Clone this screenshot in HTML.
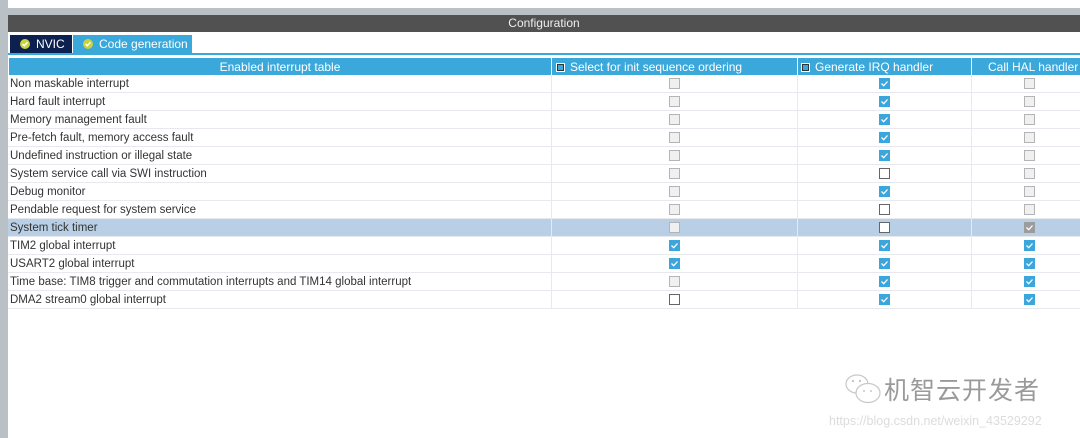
<!DOCTYPE html>
<html><head><meta charset="utf-8"><style>
*{margin:0;padding:0;box-sizing:border-box}
body{width:1080px;height:438px;overflow:hidden;background:#fff;font-family:"Liberation Sans",Arial,sans-serif;font-size:11.5px;color:#333;position:relative}
.a{position:absolute}
.row{position:absolute;left:8px;width:1072px;height:18px;border-bottom:1px solid #e6eaee}
.row span{position:absolute;left:2px;top:3px}
.vl{position:absolute;top:0;width:1px;height:18px;background:#e6eaee}
.cb{position:absolute;top:3px;width:11px;height:11px}
.d{background:#f0f0f0;border:1px solid #b4b4b4}
.e{background:#fff;border:1px solid #666}
.c{background:#3aa6dc}
.g{background:#9c9c9c}
.c svg,.g svg{position:absolute;left:1px;top:1px}
.hd{position:absolute;top:58px;height:17px;background:#3aa8da;color:#fff;font-size:12px;line-height:18px}
.hb{display:inline-block;width:9px;height:9px;border:1px solid #fff;background:#3aa8da;outline:1px solid #333;outline-offset:-2px;vertical-align:-1px;margin-right:5px}
.ic{display:inline-block;width:10px;height:10px;border-radius:50%;background:#c8d43a;position:relative;vertical-align:-1px;margin-right:6px}
</style></head><body>
<div class="a" style="left:0;top:0;width:8px;height:438px;background:#b9c1c7"></div>
<div class="a" style="left:8px;top:8px;width:1072px;height:7px;background:#b9c1c7"></div>
<div class="a" style="left:8px;top:15px;width:1072px;height:17px;background:#515151;color:#eee;text-align:center;line-height:17px;font-size:12px">Configuration</div>
<div class="a" style="left:10px;top:35px;width:62px;height:18px;background:#0c2150;color:#fff;line-height:18px;padding-left:10px;font-size:12px"><span class="ic"><svg width="10" height="10" style="position:absolute;left:0;top:0"><path d="M2.5 5 L4.3 6.8 L7.5 3.3" stroke="#fff" stroke-width="1.5" fill="none"/></svg></span>NVIC</div>
<div class="a" style="left:73px;top:35px;width:119px;height:19px;background:#3aa8da;color:#fff;line-height:18px;padding-left:10px;font-size:12px"><span class="ic"><svg width="10" height="10" style="position:absolute;left:0;top:0"><path d="M2.5 5 L4.3 6.8 L7.5 3.3" stroke="#fff" stroke-width="1.5" fill="none"/></svg></span>Code generation</div>
<div class="a" style="left:8px;top:53px;width:1072px;height:2px;background:#3aa8da"></div>
<div class="hd" style="left:9px;width:542px;text-align:center">Enabled interrupt table</div>
<div class="hd" style="left:552px;width:245px;padding-left:4px"><span class="hb"></span>Select for init sequence ordering</div>
<div class="hd" style="left:798px;width:173px;padding-left:3px"><span class="hb"></span>Generate IRQ handler</div>
<div class="hd" style="left:972px;width:108px;padding-left:16px">Call HAL handler</div>
<div id="rows"></div>
<div class="a" style="left:843px;top:372px;width:40px;height:34px">
<svg width="40" height="34"><g fill="none" stroke="#c8c8c8" stroke-width="1.2"><ellipse cx="14" cy="12" rx="11" ry="9"/><ellipse cx="25" cy="21" rx="12" ry="9.5" fill="#fff"/></g><g fill="#c8c8c8"><circle cx="10" cy="9" r="1.2"/><circle cx="17" cy="9" r="1.2"/><circle cx="21" cy="19" r="1"/><circle cx="28" cy="19" r="1"/></g></svg></div>
<div class="a" style="left:884px;top:373px;font-size:25px;color:#9a9a9a;font-family:'Noto Sans CJK SC',sans-serif;letter-spacing:1px;line-height:32px">机智云开发者</div>
<div class="a" style="left:829px;top:414px;font-size:12.5px;color:#dcdcdc">https://blog.csdn.net/weixin_43529292</div>
<script>
var R=[["Non maskable interrupt","dcd"],["Hard fault interrupt","dcd"],["Memory management fault","dcd"],["Pre-fetch fault, memory access fault","dcd"],["Undefined instruction or illegal state","dcd"],["System service call via SWI instruction","ded"],["Debug monitor","dcd"],["Pendable request for system service","ded"],["System tick timer","deg"],["TIM2 global interrupt","ccc"],["USART2 global interrupt","ccc"],["Time base: TIM8 trigger and commutation interrupts and TIM14 global interrupt","dcc"],["DMA2 stream0 global interrupt","ecc"]];
var X=[674,884,1029],h="";
R.forEach(function(r,i){var bg=i==8?"background:#b9cfe5;":"";
h+='<div class="row" style="top:'+(75+i*18)+'px;'+bg+'"><span>'+r[0]+'</span><div class="vl" style="left:543px"></div><div class="vl" style="left:789px"></div><div class="vl" style="left:963px"></div>';
for(var j=0;j<3;j++){var s=r[1][j];h+='<div class="cb '+s+'" style="left:'+(X[j]-8-5)+'px">'+((s=="c"||s=="g")?'<svg width="9" height="9"><path d="M1.5 4.5 L3.7 6.7 L7.5 2.5" stroke="#fff" stroke-width="1.3" fill="none"/></svg>':'')+'</div>';}
h+='</div>';});
document.getElementById("rows").innerHTML=h;
</script>
</body></html>
